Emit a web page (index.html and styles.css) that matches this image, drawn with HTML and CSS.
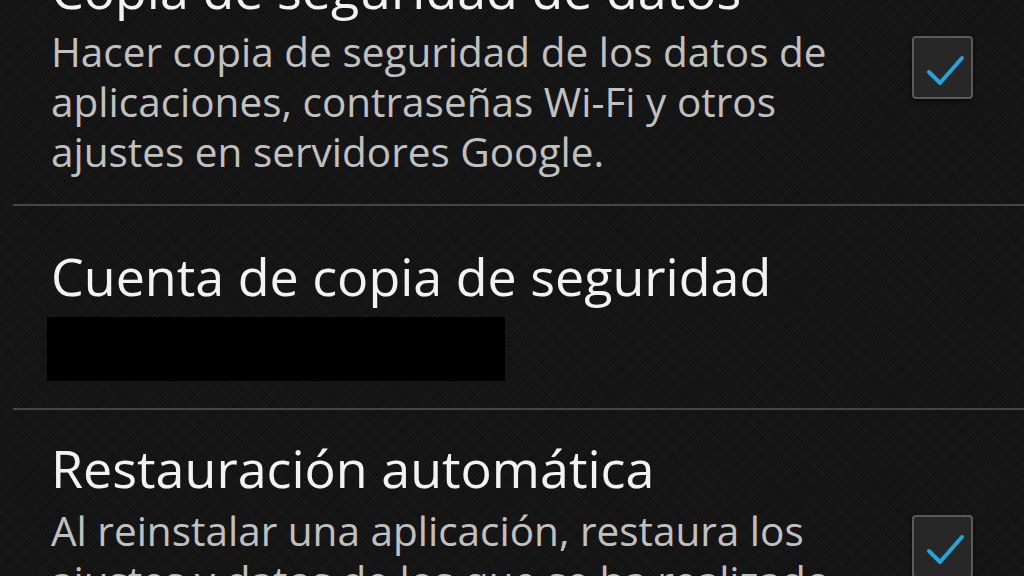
FILE: index.html
```html
<!DOCTYPE html>
<html lang="es">
<head>
  <meta charset="UTF-8">
  <meta name="viewport" content="width=device-width, initial-scale=1.0">
  <title>Copia de seguridad</title>
  <link rel="stylesheet" href="styles.css">
</head>
<body>
  <div class="list">
    <!-- Backup data -->
    <div class="pref">
      <div class="pref-text">
        <div class="pref-title">Copia de seguridad de datos</div>
        <div class="pref-summary">Hacer copia de seguridad de los datos de aplicaciones, contraseñas Wi-Fi y otros ajustes en servidores Google.</div>
      </div>
      <div class="checkbox checked">
        <svg viewBox="0 0 61 63" width="61" height="63">
          <polyline points="17,36 28,47 50,22" />
        </svg>
      </div>
    </div>

    <!-- Backup account -->
    <div class="pref">
      <div class="pref-text account">
        <div class="pref-title">Cuenta de copia de seguridad</div>
        <div class="hidden-account"></div>
      </div>
    </div>

    <!-- Automatic restore -->
    <div class="pref">
      <div class="pref-text">
        <div class="pref-title">Restauración automática</div>
        <div class="pref-summary">Al reinstalar una aplicación, restaura los ajustes y datos de los que se ha realizado una copia de seguridad.</div>
      </div>
      <div class="checkbox checked">
        <svg viewBox="0 0 61 63" width="61" height="63">
          <polyline points="17,36 28,47 50,22" />
        </svg>
      </div>
    </div>
  </div>
</body>
</html>
```

FILE: styles.css
```css
body {
  margin: 0;
  padding: 0;
  height: 100vh;
  overflow: hidden;
  font-family: "Open Sans", "Noto Sans", sans-serif;
  background-color: #151515;
  background-image:
    repeating-linear-gradient(45deg, rgba(255, 255, 255, 0.025) 0 1px, transparent 1px 3px),
    repeating-linear-gradient(-45deg, rgba(0, 0, 0, 0.25) 0 1px, transparent 1px 3px);
}

/* list is scrolled a bit, first title is cut at the top */
.list {
  margin-top: -69px;
}

.pref {
  display: flex;
  align-items: center;
  margin-left: 13px;
  padding-right: 51px;
  border-bottom: 2px solid #454545;
}

.pref:last-child {
  border-bottom: none;
}

.pref-text {
  flex: 1;
  padding: 28px 0 27px 38px;
}

.pref-text.account {
  padding-top: 40px;
}

.pref-title {
  font-size: 52px;
  line-height: 60px;
  color: #f2f2f2;
  white-space: nowrap;
}

.pref-summary {
  margin-top: 8px;
  width: 840px;
  font-size: 40.5px;
  line-height: 50px;
  color: #c0c0c0;
}

.hidden-account {
  margin: 11px 0 0 -4px;
  width: 458px;
  height: 64px;
  background: #000;
}

.checkbox {
  width: 57px;
  height: 59px;
  border: 2px solid #5a5a5a;
  border-radius: 4px;
  background: #272727;
  box-shadow: 0 2px 4px rgba(0, 0, 0, 0.7);
  position: relative;
  flex: none;
}

.checkbox svg {
  position: absolute;
  left: -2px;
  top: -2px;
}

.checkbox polyline {
  fill: none;
  stroke: #27a3dc;
  stroke-width: 4;
  stroke-linecap: round;
  stroke-linejoin: round;
}
```
